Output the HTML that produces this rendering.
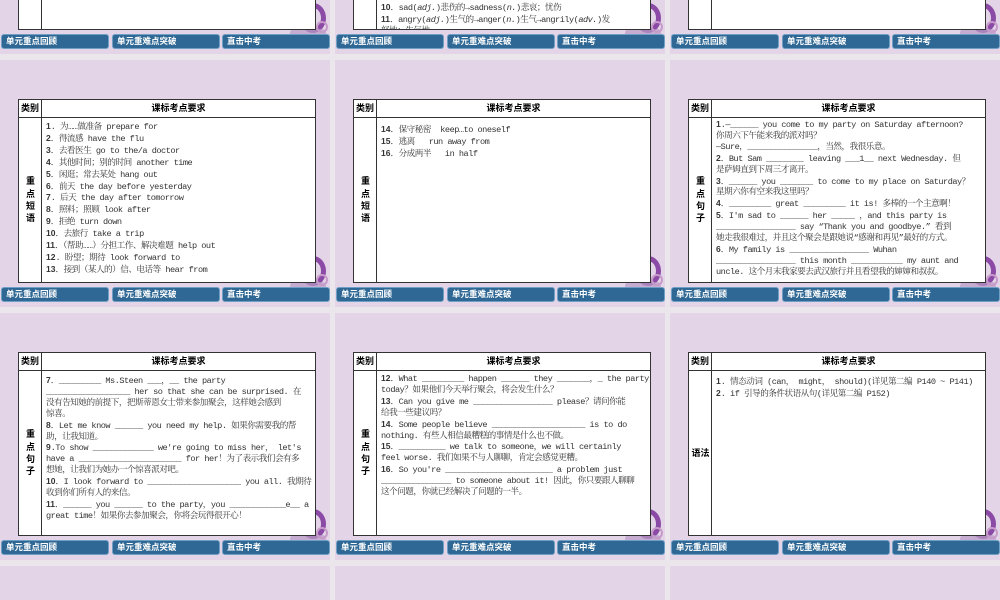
<!DOCTYPE html>
<html style="width:1000px;height:600px;overflow:hidden"><head><meta charset="utf-8"><style>
*{margin:0;padding:0;box-sizing:border-box}
body{width:1000px;height:600px;overflow:hidden;background:#ebe6ec;position:relative;font-family:"Liberation Serif","Noto Serif CJK SC",serif}
.s{position:absolute;width:330px;height:247px;background:#e3d4e8;overflow:hidden}
.ring{position:absolute;left:300px;top:196px;width:26px;height:30px;border:5px solid #8b4aa6;border-radius:50%}
.dec{position:absolute;left:290px;top:222px;width:36px;height:8px;background:#b89bc6;border-radius:4px;opacity:.7}
.dec2{position:absolute;left:316px;top:214px;width:12px;height:12px;border:2px solid #c79bc9;border-radius:50%}
.nav{position:absolute;top:227px;height:15px;background:#2f6894;border:1px solid #6f9fc4;border-radius:3px;color:#fff;font:bold 8.5px "Liberation Sans","Noto Sans CJK SC",sans-serif;line-height:13px;padding-left:4px}
.n1{left:1px;width:108px}.n2{left:112px;width:108px}.n3{left:222px;width:108px}
.t{position:absolute;left:18px;top:39px;width:298px;height:184px;border:1px solid #333;background:#fff}
.h{position:absolute;left:0;top:0;width:296px;height:18px;border-bottom:1px solid #333;font:bold 9px "Liberation Sans","Noto Sans CJK SC",sans-serif;line-height:17px}
.h .a{position:absolute;left:0;width:23px;text-align:center;border-right:1px solid #333;height:17px}
.h .b{position:absolute;left:23px;width:273px;text-align:center}
.vl{position:absolute;left:22px;top:18px;width:1px;height:164px;background:#333}
.lab{position:absolute;left:0;top:18px;width:23px;height:164px;display:flex;align-items:center;justify-content:center;font:bold 9px/12.3px "Liberation Sans","Noto Sans CJK SC",sans-serif;text-align:center}
.c{position:absolute;left:27px;top:21px;width:272px;font-family:"Liberation Mono","Noto Serif CJK SC",monospace;font-size:8.6px;letter-spacing:-0.5px;line-height:10.9px;color:#333;white-space:nowrap}
b{font-family:"Liberation Sans",sans-serif;font-size:8.5px;letter-spacing:0}
</style></head><body>

<div class="s" style="left:0;top:-193px"><div class="ring"></div><div class="dec"></div><div class="dec2"></div>
<div class="t"><div class="vl"></div></div>
<div class="nav n1">单元重点回顾</div><div class="nav n2">单元重难点突破</div><div class="nav n3">直击中考</div></div>

<div class="s" style="left:335px;top:-193px"><div class="ring"></div><div class="dec"></div><div class="dec2"></div>
<div class="t" style="overflow:hidden"><div class="vl"></div>
<div class="c" style="top:144px">词）→meeting(<i>n.</i>)会议；集会；会面<br><b>10</b>．sad(<i>adj.</i>)悲伤的→sadness(<i>n.</i>)悲哀；忧伤<br><b>11</b>．angry(<i>adj.</i>)生气的→anger(<i>n.</i>)生气→angrily(<i>adv.</i>)发<br>怒地；生气地</div></div>
<div class="nav n1">单元重点回顾</div><div class="nav n2">单元重难点突破</div><div class="nav n3">直击中考</div></div>

<div class="s" style="left:670px;top:-193px"><div class="ring"></div><div class="dec"></div><div class="dec2"></div>
<div class="t"><div class="vl"></div></div>
<div class="nav n1">单元重点回顾</div><div class="nav n2">单元重难点突破</div><div class="nav n3">直击中考</div></div>

<div class="s" style="left:0;top:60px"><div class="ring"></div><div class="dec"></div><div class="dec2"></div>
<div class="t"><div class="h"><div class="a">类别</div><div class="b">课标考点要求</div></div><div class="vl"></div>
<div class="lab">重<br>点<br>短<br>语</div>
<div class="c"><b>1</b>. 为……做准备 prepare for<br><b>2</b>．得流感 have the flu<br><b>3</b>．去看医生 go to the/a doctor<br><b>4</b>．其他时间；别的时间 another time<br><b>5</b>．闲逛；常去某处 hang out<br><b>6</b>．前天 the day before yesterday<br><b>7</b>. 后天 the day after tomorrow<br><b>8</b>．照料；照顾 look after<br><b>9</b>．拒绝 turn down<br><b>10</b>．去旅行 take a trip<br><b>11</b>．（帮助……）分担工作、解决难题 help out<br><b>12</b>. 盼望；期待 look forward to<br><b>13</b>．接到（某人的）信、电话等 hear from</div></div>
<div class="nav n1">单元重点回顾</div><div class="nav n2">单元重难点突破</div><div class="nav n3">直击中考</div></div>

<div class="s" style="left:335px;top:60px"><div class="ring"></div><div class="dec"></div><div class="dec2"></div>
<div class="t"><div class="h"><div class="a">类别</div><div class="b">课标考点要求</div></div><div class="vl"></div>
<div class="lab">重<br>点<br>短<br>语</div>
<div class="c" style="top:24px"><b>14</b>．保守秘密&nbsp; keep…to oneself<br><b>15</b>．逃离&nbsp;&nbsp; run away from<br><b>16</b>．分成两半&nbsp;&nbsp; in half</div></div>
<div class="nav n1">单元重点回顾</div><div class="nav n2">单元重难点突破</div><div class="nav n3">直击中考</div></div>

<div class="s" style="left:670px;top:60px"><div class="ring"></div><div class="dec"></div><div class="dec2"></div>
<div class="t"><div class="h"><div class="a">类别</div><div class="b">课标考点要求</div></div><div class="vl"></div>
<div class="lab">重<br>点<br>句<br>子</div>
<div class="c" style="top:19px"><b>1</b>.—______ you come to my party on Saturday afternoon?<br>你周六下午能来我的派对吗？<br>—Sure，_______________，当然，我很乐意。<br><b>2</b>．But Sam ________ leaving ___1__ next Wednesday. 但<br>是萨姆直到下周三才离开。<br><b>3</b>．______ you _______ to come to my place on Saturday？<br>星期六你有空来我这里吗？<br><b>4</b>．_________ great _________ it is! 多棒的一个主意啊！<br><b>5</b>．I'm sad to ______ her _____ ，and this party is<br>_________________ say “Thank you and goodbye.” 看到<br>她走我很难过，并且这个聚会是跟她说“感谢和再见”最好的方式。<br><b>6</b>．My family is _________________ Wuhan<br>_________________ this month ___________ my aunt and<br>uncle. 这个月末我家要去武汉旅行并且看望我的婶婶和叔叔。</div></div>
<div class="nav n1">单元重点回顾</div><div class="nav n2">单元重难点突破</div><div class="nav n3">直击中考</div></div>

<div class="s" style="left:0;top:313px"><div class="ring"></div><div class="dec"></div><div class="dec2"></div>
<div class="t"><div class="h"><div class="a">类别</div><div class="b">课标考点要求</div></div><div class="vl"></div>
<div class="lab">重<br>点<br>句<br>子</div>
<div class="c" style="top:22px"><b>7</b>．_________ Ms.Steen ___，__ the party<br>__________________ her so that she can be surprised. 在<br>没有告知她的前提下，把斯蒂恩女士带来参加聚会，这样她会感到<br>惊喜。<br><b>8</b>．Let me know ______ you need my help. 如果你需要我的帮<br>助，让我知道。<br><b>9</b>.To show _____________ we're going to miss her， let's<br>have a ______________________ for her！为了表示我们会有多<br>想她，让我们为她办一个惊喜派对吧。<br><b>10</b>．I look forward to ____________________ you all. 我期待<br>收到你们所有人的来信。<br><b>11</b>．______ you ______ to the party，you ____________e__ a<br>great time！如果你去参加聚会，你将会玩得很开心！</div></div>
<div class="nav n1">单元重点回顾</div><div class="nav n2">单元重难点突破</div><div class="nav n3">直击中考</div></div>

<div class="s" style="left:335px;top:313px"><div class="ring"></div><div class="dec"></div><div class="dec2"></div>
<div class="t"><div class="h"><div class="a">类别</div><div class="b">课标考点要求</div></div><div class="vl"></div>
<div class="lab">重<br>点<br>句<br>子</div>
<div class="c" style="top:20px"><b>12</b>．What _________ happen ______ they _______，_ the party<br>today？如果他们今天举行聚会，将会发生什么？<br><b>13</b>．Can you give me _________________ please？请问你能<br>给我一些建议吗？<br><b>14</b>．Some people believe ____________________ is to do<br>nothing. 有些人相信最糟糕的事情是什么也不做。<br><b>15</b>．__________ we talk to someone，we will certainly<br>feel worse. 我们如果不与人聊聊，肯定会感觉更糟。<br><b>16</b>．So you're _______________________ a problem just<br>_______________ to someone about it! 因此，你只要跟人聊聊<br>这个问题，你就已经解决了问题的一半。</div></div>
<div class="nav n1">单元重点回顾</div><div class="nav n2">单元重难点突破</div><div class="nav n3">直击中考</div></div>

<div class="s" style="left:670px;top:313px"><div class="ring"></div><div class="dec"></div><div class="dec2"></div>
<div class="t"><div class="h"><div class="a">类别</div><div class="b">课标考点要求</div></div><div class="vl"></div>
<div class="lab">语法</div>
<div class="c" style="top:23px"><b>1</b>. 情态动词 (can， might， should)(详见第二编 P140 ~ P141)<br><b>2</b>. if 引导的条件状语从句(详见第二编 P152)</div></div>
<div class="nav n1">单元重点回顾</div><div class="nav n2">单元重难点突破</div><div class="nav n3">直击中考</div></div>

<div class="s" style="left:0;top:566px;height:34px"></div>
<div class="s" style="left:335px;top:566px;height:34px"></div>
<div class="s" style="left:670px;top:566px;height:34px"></div>
</body></html>
